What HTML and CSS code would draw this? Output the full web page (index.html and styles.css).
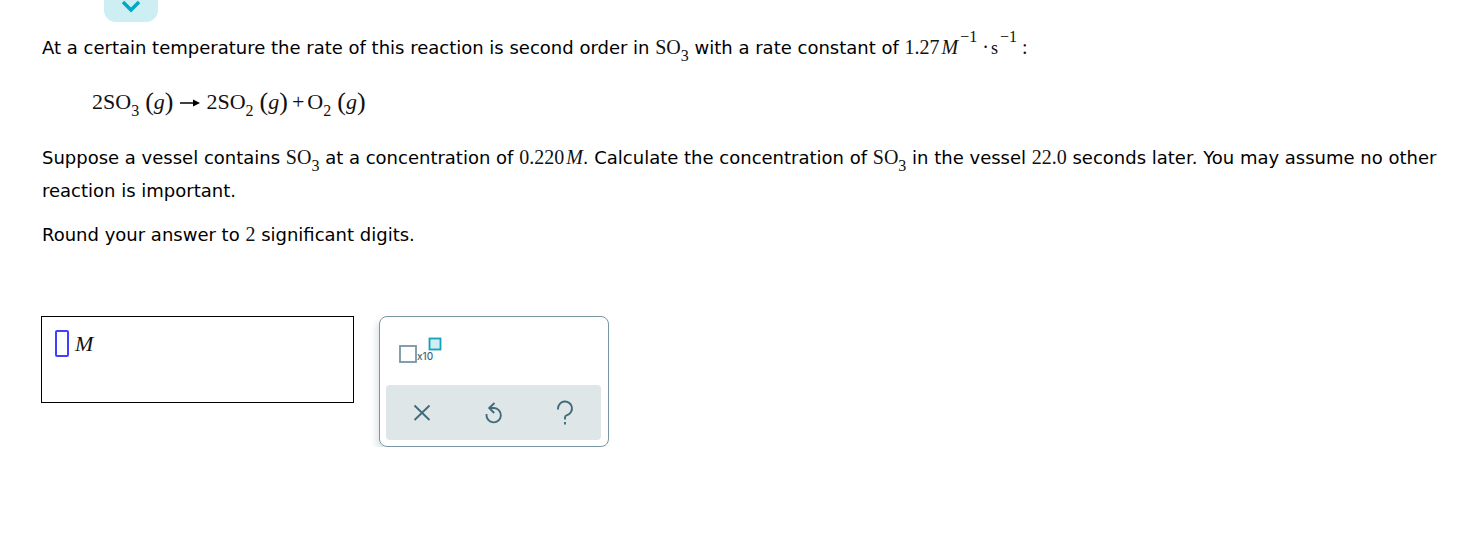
FILE: index.html
```html
<!DOCTYPE html>
<html lang="en">
<head>
<meta charset="utf-8">
<title>Second order reaction</title>
<link rel="stylesheet" href="styles.css">
</head>
<body>
<button class="tab" type="button" aria-label="Show more">
  <svg width="24" height="24" viewBox="0 0 24 24"><path d="M4 8l8 8 8-8" fill="none" stroke="#00a9c4" stroke-width="3.5"/></svg>
</button>
<main class="question">
  <p class="text">At a certain temperature the rate of this reaction is second order in <span class="math">SO<sub>3</sub></span> with a rate constant of <span class="math">1.27<i class="unit">M</i><sup>−1</sup><span class="dot">·</span><span class="second">s</span><sup>−1</sup><span class="colon">:</span></span></p>
  <p class="math equation"><span>2SO<sub>3</sub></span><span class="state"><span class="paren">(</span><i>g</i><span class="paren">)</span></span><svg class="arrow" width="20" height="10" viewBox="0 0 20 10" role="img" aria-label="yields"><path d="M0 5h14" stroke="#000" stroke-width="1.5"/><path d="M13 1.500L20 5l-7 3.500z"/></svg><span>2SO<sub>2</sub></span><span class="state"><span class="paren">(</span><i>g</i><span class="paren">)</span></span><span class="plus">+</span><span>O<sub>2</sub></span><span class="state"><span class="paren">(</span><i>g</i><span class="paren">)</span></span></p>
  <p class="text">Suppose a vessel contains <span class="math">SO<sub>3</sub></span> at a concentration of <span class="math">0.220<i class="unit">M</i></span>. Calculate the concentration of <span class="math">SO<sub>3</sub></span> in the vessel <span class="math">22.0</span> seconds later. You may assume no other reaction is important.</p>
  <p class="text">Round your answer to <span class="math">2</span> significant digits.</p>
  <div class="work">
    <label class="answer"><input class="slot" type="text" aria-label="Concentration in M"><i class="math">M</i></label>
    <section class="palette" aria-label="Math tools">
      <button class="tool" type="button" aria-label="Scientific notation">
        <svg width="44" height="28" viewBox="0 0 44 28"><rect x="1" y="9" width="16" height="16" fill="#fff" stroke="#7896a1" stroke-width="1.8"/><rect x="30.500" y="1.500" width="11" height="11" fill="#cdeef3" stroke="#14a2b9" stroke-width="1.8"/><text x="18" y="23" class="times">x10</text></svg>
      </button>
      <div class="actions">
        <button type="button" aria-label="Clear"><svg width="26" height="26" viewBox="0 0 26 26"><path d="M5.500 5.500l15 14.500M20.500 5.500L5.500 20"/></svg></button>
        <button type="button" aria-label="Undo"><svg width="26" height="26" viewBox="0 0 26 26"><path d="M6.500 14v.7A7.200 7.200 0 1 0 14 8H9.500M14.500 3L9.200 8l5 5"/></svg></button>
        <button type="button" aria-label="Help"><svg width="26" height="26" viewBox="0 0 26 26"><path d="M6 9.500V8.500a7 7 0 1 1 9 6.700Q13 15.800 13 17.500v2M13 22v2.500"/></svg></button>
      </div>
    </section>
  </div>
</main>
</body>
</html>
```
FILE: styles.css
```css
* { box-sizing: border-box; }
body {
  margin: 0;
  background: #fff;
  color: #000;
  font-family: "DejaVu Sans", Verdana, sans-serif;
  font-size: 18px;
}
button { border: 0; padding: 0; background: none; cursor: pointer; }
.tab {
  display: flex;
  justify-content: center;
  align-items: flex-end;
  width: 54px;
  height: 22px;
  margin-left: 104px;
  padding-bottom: 4px;
  overflow: hidden;
  border-radius: 0 0 12px 12px;
  background: #cdeef3;
}
.question { padding: 9px 16px 0 42px; }
.text { margin: 0 0 11px; line-height: 33px; }
.math { font-family: "Liberation Serif", "Times New Roman", serif; font-size: 20px; line-height: 1; color: #111; }
sub, sup { font-size: 16px; line-height: 0; }
sub { vertical-align: -7px; }
sup { vertical-align: 12px; margin-left: 2px; }
.unit { margin-left: 2px; }
.dot { margin: 0 2px 0 5px; }
.second { font-size: 18px; }
.colon { margin-left: 5px; }
.equation {
  display: flex;
  align-items: center;
  height: 32px;
  margin: 22px 0 23px 50px;
  font-size: 22px;
}
.state { display: flex; align-items: center; margin-left: 6px; }
.paren { font-size: 26px; }
.arrow { margin: 2px 6px 0 7px; }
.plus { margin: 0 3px 0 4px; }
.work { display: flex; align-items: flex-start; gap: 25px; margin: 65px 0 0 -1px; }
.answer {
  display: flex;
  align-items: flex-start;
  gap: 6px;
  width: 313px;
  height: 87px;
  padding: 13px;
  border: 1px solid #000;
}
.answer .math { font-size: 22px; line-height: 27px; }
.slot {
  width: 14px;
  height: 27px;
  padding: 0;
  border: 2px solid #4040ff;
  border-radius: 2px;
  outline: 0;
}
.palette {
  width: 230px;
  padding: 20px 7px 6px 6px;
  border: 1px solid #7896a1;
  border-radius: 8px;
  box-shadow: -3px 4px 6px #dfe6e8;
}
.tool { display: block; margin: 0 0 20px 13px; }
.tool svg { display: block; }
.times { font-family: Inter, sans-serif; font-size: 10px; font-weight: 500; fill: #3f6b7b; }
.actions {
  display: grid;
  grid-template-columns: repeat(3, 1fr);
  height: 55px;
  border-radius: 4px;
  background: #dfe6e8;
}
.actions button { display: flex; align-items: center; justify-content: center; }
.actions path { fill: none; stroke: #3f6b7b; stroke-width: 1.9; }
```
